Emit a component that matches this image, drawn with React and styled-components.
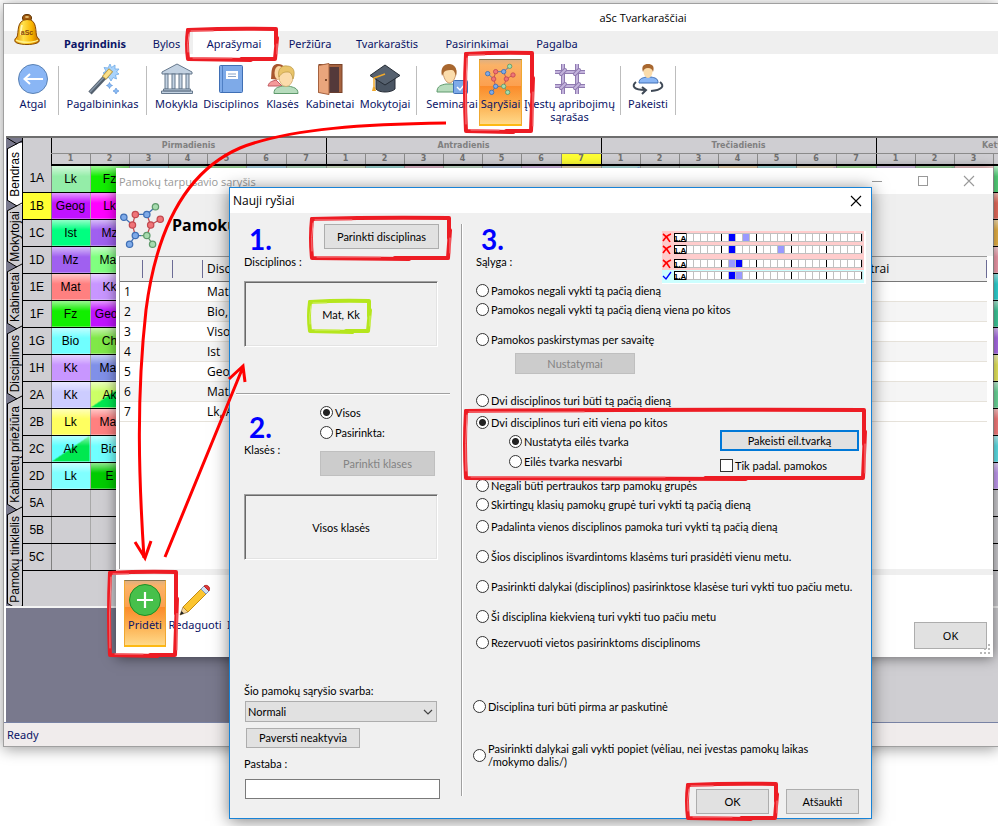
import React, { useState } from 'react';
import styled, { createGlobalStyle, css } from 'styled-components';

const uiFont = '"Noto Sans", "Open Sans", sans-serif';
const titleFont = '"Open Sans", "Noto Sans", sans-serif';
const dialogFont = 'Lato, "Open Sans", sans-serif';
const gridFont = '"Liberation Sans", Arial, sans-serif';
const navy = '#0a1466';

const GlobalStyle = createGlobalStyle`
  * {
    box-sizing: border-box;
  }

  body {
    margin: 0;
    background: #ffffff;
    font-family: ${uiFont};
    font-size: 11px;
    color: #000000;
  }

  button,
  input,
  select {
    font: inherit;
    color: inherit;
    margin: 0;
  }
`;

const Desktop = styled.div`
  position: relative;
  min-height: 100vh;
  padding: 3px 0 0 3px;
  overflow: hidden;
`;

/* ---------- main window ---------- */

const MainWindow = styled.div`
  border: 1px solid #a0a0a0;
  border-right: none;
  background: #ffffff;
  box-shadow: 0 2px 14px rgba(0, 0, 0, 0.4);
`;

const TitleBar = styled.header`
  display: flex;
  align-items: center;
  justify-content: center;
  height: 27px;
  padding-left: 284px;
  font-family: ${titleFont};
  font-size: 11px;
`;

const Bell = styled.svg`
  position: absolute;
  left: 13px;
  top: 13px;
`;

const TabBar = styled.nav`
  display: flex;
  height: 23px;
  padding-left: 46px;
  background: #efefef;
`;

const Tab = styled.button`
  width: ${(p) => p.$w}px;
  padding: 2px 0 0;
  border: none;
  background: ${(p) => (p.$active ? '#ffffff' : 'transparent')};
  color: ${navy};
  font-weight: ${(p) => (p.$bold ? 700 : 400)};
  white-space: nowrap;
`;

const Toolbar = styled.div`
  display: flex;
  align-items: flex-start;
  height: 82px;
  padding: 5px 0 0 4px;
`;

const Separator = styled.div`
  width: 1px;
  height: 49px;
  margin: 7px ${(p) => p.$right || 0}px 0 ${(p) => p.$left || 0}px;
  background: #bdbdbd;
`;

const ToolButton = styled.button`
  display: flex;
  flex-direction: column;
  align-items: center;
  flex: none;
  width: ${(p) => p.$w}px;
  height: 67px;
  padding: 3px 0 0;
  border: 1px solid transparent;
  background: transparent;
  color: ${navy};
  line-height: 13px;
  text-align: center;
  white-space: pre;

  svg {
    flex: none;
    margin-bottom: 2px;
    overflow: visible;
  }

  ${(p) =>
    p.$active &&
    css`
      border-color: #8a7850 #f0a830 #fdb913;
      border-bottom-width: 2px;
      background: linear-gradient(#e0b080, #fbb266 8%, #fca050 40%, #fb8b2b 41%, #fcb050 70%, #ffd98a);
    `}
`;

/* ---------- timetable ---------- */

const Workspace = styled.div`
  display: flex;
  height: 470px;
  margin-left: 2px;
  border-top: 2px solid #6e6e6e;
  background: #cfced2;
  overflow: hidden;
`;

const SideTabs = styled.div`
  display: flex;
  flex-direction: column;
  flex: none;
  width: 17px;
  padding-left: 1px;
  border-right: 1px solid #000000;
  background: #79798d;
`;

const SideTab = styled.button`
  flex: none;
  height: ${(p) => p.$h}px;
  padding: 0 1px 0 0;
  border: none;
  border-left: 1px solid #000000;
  background: ${(p) => (p.$active ? '#ffffff' : '#cfced2')};
  font-family: ${gridFont};
  font-size: 12px;
  line-height: 14px;

  span {
    display: block;
    writing-mode: vertical-rl;
    transform: rotate(180deg);
    white-space: nowrap;
    margin: auto;
  }
`;

const NotchSvg = styled.svg`
  flex: none;
  display: block;
`;

const Timetable = styled.table`
  flex: none;
  width: 1128px;
  table-layout: fixed;
  border-collapse: collapse;
  font-family: ${gridFont};
  font-size: 12px;
  align-self: flex-start;

  th,
  td {
    padding: 0;
    text-align: center;
    font-weight: 400;
    white-space: nowrap;
    overflow: hidden;
  }
`;

const DayHead = styled.th`
  && {
    height: 15px;
    border-left: 1px solid #000000;
    border-bottom: 1px solid #8c8c8c;
    color: #808080;
    font-family: "DejaVu Sans", sans-serif;
    font-size: 8px;
    font-weight: 700;
  }
`;

const HourHead = styled.th`
  && {
    height: 12px;
    border-left: 1px solid ${(p) => (p.$first ? '#000000' : '#8c8c8c')};
    border-bottom: 2px solid #000000;
    background: ${(p) => (p.$marked ? '#ffff33' : 'transparent')};
    color: #707070;
    font-family: "DejaVu Sans", sans-serif;
    font-size: 8px;
    font-weight: 700;
    line-height: 10px;
  }
`;

const ClassHead = styled.th`
  && {
    height: 27px;
    border-right: 1px solid #808080;
    border-bottom: 1px solid #000000;
    background: ${(p) => (p.$marked ? '#ffff33' : 'transparent')};
  }
`;

const Lesson = styled.td`
  && {
    height: 27px;
    border-right: 1px solid #a8a8a8;
    border-bottom: 1px solid #000000;
    background: ${(p) =>
      p.$color
        ? `linear-gradient(rgba(255,255,255,.6), rgba(255,255,255,0) 40%), ${
            p.$corner ? `linear-gradient(to bottom right, ${p.$color} 50%, ${p.$corner} 51%)` : p.$color
          }`
        : 'transparent'};
  }
`;

const LowerPane = styled.div`
  display: flex;
  height: 116px;
  margin-left: 2px;
  border-top: 2px solid #f4f4f4;
`;

const DarkPart = styled.div`
  flex: 1;
  background: #79798d;
`;

const LightPart = styled.div`
  width: 240px;
  background: #cfced2;
`;

const StatusBar = styled.footer`
  height: 24px;
  padding-left: 3px;
  border-top: 1px solid #7882a4;
  background: #f0ecec;
  color: ${navy};
  line-height: 23px;
`;

/* ---------- relations window ---------- */

const RelationsWindow = styled.section`
  position: absolute;
  top: 168px;
  left: 116px;
  right: 5px;
  background: #ffffff;
  box-shadow: 0 1px 12px rgba(0, 0, 0, 0.5);
`;

const RelationsTitle = styled.div`
  display: flex;
  align-items: center;
  justify-content: space-between;
  height: 26px;
  padding: 0 18px 0 3px;
  color: #999999;
  font-family: ${titleFont};
  font-size: 11px;
`;

const CaptionButtons = styled.div`
  display: flex;
  gap: 34px;
`;

const CaptionButton = styled.button`
  display: flex;
  padding: 0;
  border: none;
  background: transparent;
`;

const RelationsHead = styled.div`
  display: flex;
  align-items: center;
  gap: 6px;
  height: 62px;
  padding-left: 4px;
  background: #efefef;

  h2 {
    margin: 0;
    font-family: ${titleFont};
    font-size: 16px;
    font-weight: 700;
  }
`;

const ListFrame = styled.div`
  height: 313px;
  margin: 0 6px 0 3px;
  border-left: 1px solid #9a9a9a;
`;

const RelationList = styled.table`
  width: 100%;
  border-collapse: collapse;
  font-family: ${titleFont};
  font-size: 12px;
  line-height: 18px;

  th {
    height: 25px;
    padding: 0 4px;
    border-top: 1px solid #9a9a9a;
    border-bottom: 1px solid #777777;
    background: linear-gradient(#6b6b95, #6b6b95) right 50% / 1px 18px no-repeat #efefef;
    font-weight: 400;
    text-align: left;
  }

  td {
    height: 20px;
    padding: 0 4px;
    border-bottom: 1px solid #e6e2da;
    white-space: nowrap;
  }

  tr:nth-child(even) td {
    background: #f5f5f5;
  }
`;

const RelationsFoot = styled.div`
  display: flex;
  align-items: flex-start;
  height: 88px;
  padding: 5px 6px 0 8px;
  border-top: 6px solid #efefef;
`;

const FootOk = styled.div`
  margin: 42px 0 0 auto;
`;

const Grip = styled.svg`
  position: absolute;
  right: 2px;
  bottom: 2px;
`;

/* ---------- dialog ---------- */

const Dialog = styled.section`
  position: absolute;
  top: 187px;
  left: 229px;
  right: 126px;
  border: 1px solid #1883d7;
  background: #f0f0f0;
  box-shadow: 0 2px 16px rgba(0, 0, 0, 0.5);
  font-family: ${dialogFont};
  font-size: 11px;
`;

const DialogTitle = styled.div`
  display: flex;
  align-items: center;
  justify-content: space-between;
  height: 25px;
  padding: 0 9px 0 3px;
  background: #ffffff;
  font-family: ${titleFont};
  font-size: 12px;
`;

const DialogBody = styled.form`
  display: flex;
  padding: 11px 0 4px;
`;

const LeftColumn = styled.div`
  display: flex;
  flex-direction: column;
  flex: none;
  width: 210px;
  padding: 0 0 15px 14px;
`;

const Divider = styled.div`
  width: 2px;
  margin: 0 7px 18px 21px;
  border-left: 1px solid #a0a0a0;
  border-right: 1px solid #ffffff;
`;

const RightColumn = styled.div`
  display: flex;
  flex-direction: column;
  flex: 1;
  min-width: 0;
  padding: 0 5px 0 6px;
`;

const StepRow = styled.div`
  display: flex;
  justify-content: space-between;
  width: 195px;
`;

const StepName = styled.div`
  padding-top: ${(p) => p.$drop || 0}px;
  line-height: 16px;
`;

const StepNumber = styled.div`
  padding-left: 5px;
  color: #0000ff;
  font-size: 28px;
  font-weight: 700;
  line-height: 30px;
`;

const StepControls = styled.div`
  display: flex;
  flex-direction: column;
  gap: 4px;
  width: 119px;
`;

const PushButton = styled.button`
  width: ${(p) => p.$w}px;
  height: ${(p) => p.$h || 25}px;
  margin-top: ${(p) => p.$top || 0}px;
  padding: 0;
  border: ${(p) => (p.$focus ? '2px solid #0078d7' : '1px solid #adadad')};
  background: #e1e1e1;

  &:disabled {
    border-color: #bfbfbf;
    background: #cccccc;
    color: #838383;
  }
`;

const SunkenBox = styled.div`
  display: flex;
  align-items: center;
  justify-content: center;
  width: 194px;
  height: 66px;
  margin-top: ${(p) => p.$top}px;
  border: 1px solid;
  border-color: #a0a0a0 #ffffff #ffffff #a0a0a0;
  box-shadow: inset 1px 1px #696969, inset -1px -1px #e3e3e3;
`;

const Rule = styled.hr`
  width: 214px;
  margin: 46px 0 9px -8px;
  border: none;
  border-top: 1px solid #a0a0a0;
  border-bottom: 1px solid #ffffff;
`;

const Bottom = styled.div`
  display: flex;
  flex-direction: column;
  align-items: flex-start;
  margin-top: auto;
  line-height: 16px;
`;

const Field = styled.label`
  display: flex;
  flex-direction: column;
  gap: ${(p) => p.$gap}px;
`;

const SelectWrap = styled.span`
  position: relative;
  display: block;
  margin-left: 1px;

  svg {
    position: absolute;
    right: 4px;
    top: 8px;
    pointer-events: none;
  }
`;

const Select = styled.select`
  appearance: none;
  width: 192px;
  height: 21px;
  padding: 0 2px;
  border: 1px solid #adadad;
  border-radius: 0;
  background: #e1e1e1;
`;

const NoteInput = styled.input`
  width: 195px;
  height: 20px;
  margin-left: 1px;
  padding: 0 3px;
  border: 1px solid #7a7a7a;
  background: #ffffff;
`;

const InactiveRow = styled.div`
  margin: 6px 0 8px 2px;
`;

const Choice = styled.label`
  display: flex;
  align-items: center;
  gap: 2px;
  min-height: 16px;
  margin-top: ${(p) => p.$gap || 0}px;
  line-height: 13px;
`;

const RadioInput = styled.input.attrs({ type: 'radio' })`
  appearance: none;
  flex: none;
  width: 13px;
  height: 13px;
  border: 1px solid #333333;
  border-radius: 50%;
  background: #ffffff;

  &:checked {
    background: radial-gradient(circle, #222222 0 3px, #ffffff 4px);
  }
`;

const CheckInput = styled.input.attrs({ type: 'checkbox' })`
  appearance: none;
  flex: none;
  width: 13px;
  height: 13px;
  border: 1px solid #333333;
  background: #ffffff;

  &:checked {
    background: #333333;
  }
`;

const ConditionHead = styled.div`
  display: flex;
  justify-content: space-between;
  align-items: flex-start;
  height: 58px;
`;

const Schema = styled.svg`
  flex: none;
  margin-top: 7px;
`;

const ButtonRow = styled.div`
  padding: 6px 0 0 39px;
`;

const OrderRow = styled.div`
  display: flex;
  justify-content: space-between;
  padding: 0 7px 0 33px;
`;

const OrderSide = styled.div`
  display: flex;
  flex-direction: column;
  width: 139px;
`;

const WideChoices = styled.div`
  margin: 48px 0 0 -3px;
`;

const Actions = styled.div`
  display: flex;
  justify-content: flex-end;
  gap: 17px;
  margin-top: 21px;
  padding-right: 7px;
`;

const Notes = styled.svg`
  position: absolute;
  left: 0;
  top: 0;
  pointer-events: none;
`;

/* ---------- icons ---------- */

const BellIcon = () => (
  <Bell width="29" height="33" viewBox="0 0 29 33">
    <defs>
      <linearGradient id="gold">
        <stop offset="0" stopColor="#e08a00" />
        <stop offset=".35" stopColor="#ffe14a" />
        <stop offset=".7" stopColor="#f8b400" />
        <stop offset="1" stopColor="#c06a00" />
      </linearGradient>
    </defs>
    <ellipse cx="14" cy="5" rx="4.500" ry="3.500" fill="#a35a10" stroke="#5c3200" />
    <ellipse cx="14" cy="4" rx="2" ry="1" fill="#e8c070" />
    <path d="M4 24C6 20 3 7 14 6.500S22 20 24 24c3 2 3 5 0 6-5 2-15 2-20 0-3-1-3-4 0-6z" fill="url(#gold)" stroke="#8a4a00" />
    <path d="M3 27c5 3 18 3 22 0" fill="none" stroke="#fff08a" strokeWidth="1.500" />
    <path d="M9 12c-1 3-1 6-1 10" stroke="#fff9b0" strokeWidth="2" fill="none" />
    <text x="14" y="22" fontSize="7" fontWeight="700" fontFamily="Liberation Sans, sans-serif" textAnchor="middle" fill="#8a4a10">aSc</text>
  </Bell>
);

const BackIcon = () => (
  <svg width="32" height="32" viewBox="0 0 32 32">
    <circle cx="16" cy="16" r="14.500" fill="#8ab6f5" stroke="#5a82b4" />
    <path d="M26 16H8m5-5-5.500 5 5.500 5" fill="none" stroke="#fff" strokeWidth="2" />
  </svg>
);

const WandIcon = () => (
  <svg width="32" height="32" viewBox="0 0 32 32">
    <path d="M23 1l1.500 3.500L28 2l0 4 4 0-2.500 3L32 11l-3.500 1 1 4-3.500-1.500L24 18l-2-3.500-4 1 1-4-3-1.500 3-2-2-3.500 4 .5z" fill="#a9d3fb" stroke="#6fa9e6" strokeWidth=".8" />
    <path d="M3 30l15-16" stroke="#54606e" strokeWidth="4.500" />
    <path d="M3 29l15-16" stroke="#8797a8" strokeWidth="1.500" />
    <path d="M17 15l7-8" stroke="#b0903a" strokeWidth="5.500" />
    <path d="M17.500 14.500l6-7" stroke="#fbe08a" strokeWidth="4" />
    <path d="M22.500 19.500l1 2 2 1-2 1-1 2-1-2-2-1 2-1zM29 25l1 2 2 1-2 1-1 2-1-2-2-1 2-1z" fill="#8abcf5" stroke="#5d94da" strokeWidth=".7" />
  </svg>
);

const SchoolIcon = () => (
  <svg width="32" height="32" viewBox="0 0 32 32" fill="#c3d2e2" stroke="#66788c">
    <path d="M1 9L16 1l15 8v2H1z" />
    <rect x="4" y="11" width="3" height="15" />
    <rect x="11" y="11" width="3" height="15" />
    <rect x="18" y="11" width="3" height="15" />
    <rect x="25" y="11" width="3" height="15" />
    <path d="M2.500 26h27v2h-27zM.5 28h31v2.500H.5z" />
  </svg>
);

const BookIcon = () => (
  <svg width="32" height="32" viewBox="0 0 32 32">
    <rect x="4.500" y="2.500" width="23" height="27" rx="1" fill="#7eaae8" stroke="#3f6fb5" />
    <path d="M7.500 3v26" stroke="#4f7fc4" />
    <rect x="11" y="8" width="12" height="8" fill="#fff" />
    <path d="M13 11h8M13 13.500h8" stroke="#8aa4c8" />
  </svg>
);

const PeopleIcon = () => (
  <svg width="32" height="32" viewBox="0 0 32 32">
    <path d="M1 23c1-5 6-5 8-6l6 6z" fill="#f49a9a" stroke="#c25c62" />
    <path d="M4 16c1-5-1-15 7-15 6 0 7 4 7 8l-4 8z" fill="#a8562e" />
    <ellipse cx="12" cy="10" rx="4.500" ry="7" fill="#fbd7a2" />
    <path d="M7 30.500c0-6 4-6 8-7.500h7c4 1.500 9 1.500 9 7.500z" fill="#b7dcbd" stroke="#5f9a6c" />
    <ellipse cx="19" cy="14" rx="7" ry="9.500" fill="#fbdcab" stroke="#c8a060" strokeWidth=".7" />
    <path d="M12 14c-2-8 3-12 8-11 6 0 9 5 6 13-1-4-2-7-5-7s-6 0-9 5z" fill="#e9c46a" stroke="#b99540" strokeWidth=".7" />
  </svg>
);

const DoorIcon = () => (
  <svg width="32" height="32" viewBox="0 0 32 32">
    <rect x="5" y="1.500" width="23" height="28" fill="#a5623f" stroke="#7a4228" />
    <rect x="12" y="4" width="13" height="25.500" fill="#54393a" />
    <path d="M4.500 2.500L15 .500v31L4.500 29.500z" fill="#eaa57c" stroke="#a5623f" />
    <circle cx="12" cy="17" r="1" fill="#5c2c12" />
  </svg>
);

const CapIcon = () => (
  <svg width="32" height="32" viewBox="0 0 32 32">
    <path d="M7 14v12c3 4 15 4 19 0V14z" fill="#4a5563" stroke="#262d36" />
    <path d="M1 12.500L16 2l15 10.500L16 22z" fill="#56616f" stroke="#262d36" />
    <path d="M16 11L5 15v10" fill="none" stroke="#f0a92c" strokeWidth="1.500" />
    <path d="M3 28l1-4h2l1 4z" fill="#f0a92c" />
  </svg>
);

const SeminarIcon = () => (
  <svg width="32" height="32" viewBox="0 0 32 32">
    <path d="M1 29c0-6 4-7 9-8h6c5 1 8 2 8 8z" fill="#b7dcbd" stroke="#5f9a6c" />
    <path d="M7 8c0-4 3-6 6-6s7 2 7 7-3 11-6.500 11S7 14 7 8z" fill="#fbdcab" stroke="#b57b48" strokeWidth=".7" />
    <path d="M6 13C4 5 8 1 13 1s9 4 7 12c-1-3-2-6-4-6s-6 0-8 2z" fill="#a8672f" />
    <rect x="17.500" y="17.500" width="14" height="13" rx="1" fill="#7eaae8" stroke="#3f6fb5" />
    <path d="M21 24l3 3 5-6" fill="none" stroke="#fff" strokeWidth="1.500" />
  </svg>
);

const NetIcon = ({ size = 32 }) => (
  <svg width={size} height={size} viewBox="0 0 48 48" strokeWidth="1.300">
    <path d="M28 13h-12M37 5l-9 8M4 16l9 8M16 35l-6 9M16 35h6" fill="none" stroke="#3f6fb5" />
    <path d="M16 13l-3 11 3 11M28 13l4 11-4 11M42 18l-10 6" fill="none" stroke="#c24a50" />
    <path d="M22 35h6l6 9" fill="none" stroke="#5f9a6c" />
    <g fill="#7eaae8" stroke="#3f6fb5">
      <circle cx="4" cy="16" r="3.300" />
      <circle cx="28" cy="13" r="3.300" />
      <circle cx="16" cy="35" r="3.300" />
      <circle cx="10" cy="44" r="3.300" />
    </g>
    <g fill="#f07478" stroke="#c24a50">
      <circle cx="16" cy="13" r="3.300" />
      <circle cx="13" cy="24" r="3.300" />
      <circle cx="32" cy="24" r="3.300" />
      <circle cx="42" cy="18" r="3.300" />
    </g>
    <g fill="#a6dbae" stroke="#5f9a6c">
      <circle cx="37" cy="5" r="3.300" />
      <circle cx="28" cy="35" r="3.300" />
      <circle cx="34" cy="44" r="3.300" />
    </g>
  </svg>
);

const FenceIcon = () => (
  <svg width="32" height="32" viewBox="0 0 32 32">
    <path d="M9 1v30M23 1v30M1 9h30M1 23h30" stroke="#8f7ab0" strokeWidth="4" />
    <path d="M9 1v30M23 1v30M1 9h30M1 23h30" stroke="#c3b3dc" strokeWidth="2" />
    <path d="M7 11l4-4M21 11l4-4M7 25l4-4M21 25l4-4" stroke="#8f7ab0" strokeWidth="4" strokeLinecap="round" />
    <path d="M7 11l4-4M21 11l4-4M7 25l4-4M21 25l4-4" stroke="#c3b3dc" strokeWidth="2" strokeLinecap="round" />
  </svg>
);

const SwapIcon = () => (
  <svg width="32" height="32" viewBox="0 0 32 32">
    <path d="M7 20c0-5 4-5 7-6h5c4 1 7 1 7 6z" fill="#8ab6f5" stroke="#3f6fb5" />
    <ellipse cx="16" cy="8.500" rx="4.500" ry="6.500" fill="#fbdcab" />
    <path d="M11 9C9 3 12 1 16 1s7 2 5 8c-1-3-2-4-5-4s-4 1-5 4z" fill="#a8672f" />
    <path d="M4 19c-5 4-2 8 9 8m-3-3l4 3-4 4M28 19c5 4 2 8-9 9" fill="none" stroke="#3f4956" strokeWidth="2" />
  </svg>
);

const PlusIcon = () => (
  <svg width="32" height="32" viewBox="0 0 32 32">
    <circle cx="16" cy="16" r="15.500" fill="#47c04b" stroke="#1d8f25" />
    <path d="M16 8v16M8 16h16" stroke="#fff" strokeWidth="2.200" />
  </svg>
);

const PencilIcon = () => (
  <svg width="32" height="32" viewBox="0 0 32 32">
    <path d="M1 31l3-8 5 5z" fill="#f2d39a" stroke="#8a6a30" strokeWidth=".7" />
    <path d="M1 31l1.500-4 2.500 2.500z" fill="#222" />
    <path d="M4 23L22 5l5 5L9 28z" fill="#fbc531" stroke="#c48d14" />
    <path d="M22 5l3-3 5 5-3 3z" fill="#cfe0f4" stroke="#7f98b8" />
    <path d="M25 2c3-2 7 1 5 5z" fill="#e33a3a" stroke="#b02626" />
  </svg>
);

const DeleteIcon = () => (
  <svg width="32" height="32" viewBox="0 0 32 32">
    <path d="M6 6l20 20M26 6L6 26" stroke="#d03030" strokeWidth="4" />
  </svg>
);

const CloseIcon = ({ color }) => (
  <svg width="12" height="12" viewBox="0 0 12 12">
    <path d="M1 1l10 10M11 1L1 11" stroke={color} strokeWidth="1.100" />
  </svg>
);

/* ---------- data ---------- */

const menuTabs = [
  { name: 'Pagrindinis', w: 90, bold: true },
  { name: 'Bylos', w: 53 },
  { name: 'Aprašymai', w: 82 },
  { name: 'Peržiūra', w: 70 },
  { name: 'Tvarkaraštis', w: 84 },
  { name: 'Pasirinkimai', w: 96 },
  { name: 'Pagalba', w: 64 },
];

const days = ['Pirmadienis', 'Antradienis', 'Trečiadienis', 'Ketvirtadienis'];
const hours = [1, 2, 3, 4, 5, 6, 7];
const hourWidths = [39, 39, 39, 39, 39, 40, 40];

const firstRow = [
  ['#50c8d8'], ['#48d890'], ['#50d850'], ['#60c8e8'], ['#80d8a0'],
  ['#b8e0a0'], ['#40c8c0'], ['#d880a8'], ['#a0d8b0'], ['#80a8e0'], ['#b880e0'], ['#e8c070'],
  ['#70dcdc', '#1a70e0'], ['#98aea8'], ['#9ed8a8'], ['#e8bc68'], ['#50d4d4'], ['#e8d490', '#a880d8'], ['#50d838'],
  ['#bc9ce4'], ['#44c444', '#208830'], ['#f09898'], ['#58dc80'],
];

const edgeColors = ['#58dc80', '#f07060', '#f0b848', '#f8a0b0', '#30dcdc', '#40d0a0', '#b070f0', '#f0f060', '#70e0a0', '#ff8080', '#60e8f0', '#c8a0f8'];

const classes = [
  { name: '1A', cells: [['Lk', '#94eda8'], ['Fz', '#12ee00']] },
  { name: '1B', marked: true, cells: [['Geog', '#c012ff'], ['Lk', '#ff00ff']] },
  { name: '1C', cells: [['Ist', '#00ff80'], ['Mz', '#a060f0']] },
  { name: '1D', cells: [['Mz', '#a060f0'], ['Mat', '#80ff80']] },
  { name: '1E', cells: [['Mat', '#ff8080'], ['Kk', '#c896ff']] },
  { name: '1F', cells: [['Fz', '#12ee00'], ['Geog', '#c012ff']] },
  { name: '1G', cells: [['Bio', '#70ffff'], ['Ch', '#80e848']] },
  { name: '1H', cells: [['Kk', '#c896ff'], ['Mat', '#8090e8']] },
  { name: '2A', cells: [['Kk', '#ccccff'], ['Ak', '#ccff66', '#00e850']] },
  { name: '2B', cells: [['Lk', '#ffff60'], ['Mat', '#ff8080']] },
  { name: '2C', cells: [['Ak', '#60ffff', '#00e850'], ['Bio', '#70ffff']] },
  { name: '2D', cells: [['Lk', '#80ffff'], ['E', '#00cc00']] },
  { name: '5A', cells: [] },
  { name: '5B', cells: [] },
  { name: '5C', cells: [] },
];

const sideTabs = [
  { name: 'Bendras', h: 51 },
  { name: 'Mokytojai', h: 50 },
  { name: 'Kabinetai', h: 51 },
  { name: 'Disciplinos', h: 59 },
  { name: 'Kabinetų priežiūra', h: 100 },
  { name: 'Pamokų tinklelis', h: 88 },
];

const relations = ['Mat, Kk', 'Bio, Ch', 'Viso', 'Ist', 'Geog', 'Mat', 'Lk, Ak'];

const schemaRows = [
  { y: 2, dark: 6, light: 8 },
  { y: 14, dark: 6, light: 13 },
  { y: 28, dark: 7, light: 6 },
  { y: 40, dark: 6, light: 7, ok: true },
];

/* ---------- parts ---------- */

const Notch = ({ above, below }) => (
  <NotchSvg width="15" height="11" viewBox="0 0 15 11">
    <rect width="15" height="6" fill={above} />
    <rect y="5" width="15" height="6" fill={below} />
    <path d="M0 0L10 6 0 11z" fill="#79798d" />
    <path d="M0 0l10 6M0 11L15 3" fill="none" stroke="#000" />
  </NotchSvg>
);

const Tool = ({ label, w, active, children }) => (
  <ToolButton type="button" $w={w} $active={active}>
    {children}
    {label}
  </ToolButton>
);

const lessonFor = (row, rowIndex, col) => {
  if (row.cells[col]) return row.cells[col];
  if (rowIndex === 0 && firstRow[col - 2]) return ['', ...firstRow[col - 2]];
  if (col === 24 && edgeColors[rowIndex]) return ['', edgeColors[rowIndex]];
  return [''];
};

const Grid = () => (
  <Timetable>
    <colgroup>
      <col style={{ width: 28 }} />
      {days.map((day) => hourWidths.map((w, i) => <col key={day + i} style={{ width: w }} />))}
    </colgroup>
    <thead>
      <tr>
        <th rowSpan={2} />
        {days.map((day) => (
          <DayHead key={day} colSpan={7}>{day}</DayHead>
        ))}
      </tr>
      <tr>
        {days.map((day, d) =>
          hours.map((h) => (
            <HourHead key={day + h} $first={h === 1} $marked={d === 1 && h === 7}>{h}</HourHead>
          ))
        )}
      </tr>
    </thead>
    <tbody>
      {classes.map((row, r) => (
        <tr key={row.name}>
          <ClassHead $marked={row.marked}>{row.name}</ClassHead>
          {days.map((day, d) =>
            hours.map((h, i) => {
              const [name, color, corner] = lessonFor(row, r, d * 7 + i);
              return <Lesson key={day + h} $color={color} $corner={corner}>{name}</Lesson>;
            })
          )}
        </tr>
      ))}
    </tbody>
  </Timetable>
);

const ConditionSchema = () => (
  <Schema width="204" height="53" viewBox="0 0 204 53">
    <rect width="204" height="53" fill="#fff" />
    <rect width="202" height="39" fill="#ffcccc" />
    <rect y="39" width="202" height="13" fill="#ccffff" />
    {schemaRows.map((row) => (
      <g key={row.y} transform={`translate(0 ${row.y})`}>
        {row.ok ? (
          <path d="M1 5l3 3 5-7" fill="none" stroke="#0000ff" strokeWidth="1.300" />
        ) : (
          <path d="M1 1c3 2 5 4 7 8M9 1C6 2 3 5 1 8" fill="none" stroke="#ff0000" strokeWidth="1.600" />
        )}
        <rect x="12.500" y=".500" width="12" height="8" fill="#fff" stroke="#000" />
        <text x="18" y="8" fontSize="8" fontWeight="700" fontFamily="Liberation Sans, sans-serif" textAnchor="middle">1.A</text>
        <rect x="25" y=".500" width="175" height="8" fill="#fff" stroke="#c0c0c0" />
        {Array.from({ length: 25 }, (_, i) => {
          const last = i % 5 === 4;
          const fill = i === row.dark ? '#0000ff' : i === row.light ? '#9999ff' : '#fff';
          return (
            <g key={i}>
              <rect x={25 + i * 7} y="1" width="6" height="7" fill={fill} />
              <rect x={24 + i * 7 + 7} y="1" width="1" height="7" fill={last ? '#000' : '#c0c0c0'} />
            </g>
          );
        })}
      </g>
    ))}
  </Schema>
);

const Frame = ({ x, y, w, h, color = '#ed1c24', pale = '#f7888c' }) => (
  <g transform={`translate(${x} ${y})`} fill="none" strokeLinejoin="round" strokeLinecap="round">
    <path d={`M3 4Q${w / 2} 2 ${w - 3} 3L${w - 3} ${h / 2}`} stroke={color} strokeWidth="4" />
    <path d={`M${w - 2} ${h / 3}L${w - 4} ${h - 3}L${w * 0.6} ${h - 3}`} stroke={color} strokeWidth="4" />
    <path d={`M${w * 0.7} ${h - 2}L3 ${h - 3}Q1 ${h / 2} 3 4`} stroke={color} strokeWidth="4" />
    <path d={`M6 5H${w * 0.3}M${w - 2} ${h / 2}V${h - 8}M3 ${h - 10}Q2 ${h / 2} 4 8M8 ${h - 4}H${w * 0.5}`} stroke={pale} strokeWidth="1" />
  </g>
);

const Annotations = () => (
  <Notes width="998" height="826" viewBox="0 0 998 826">
    <Frame x="185" y="26" w={94} h={36} />
    <Frame x="463" y="50" w={72} h={84} />
    <Frame x="309" y="215" w={143} h={46} />
    <Frame x="307" y="298" w={65} h={36} color="#b5e61d" pale="#d3f070" />
    <Frame x="463" y="407" w={404} h={74} />
    <Frame x="107" y="569" w={72} h={89} />
    <Frame x="685" y="781" w={94} h={40} />
    <g fill="none" stroke="#ff0000" strokeWidth="3">
      <path d="M446 123C370 124 290 128 240 148C180 174 155 240 146 310C136 400 139 480 144 558" />
      <path d="M135 542l10 16 6-17" />
      <path d="M165 557L243 367M229 379l14-13 2 16" />
    </g>
  </Notes>
);

const conditions = [
  { id: 'group', gap: 4, text: 'Negali būti pertraukos tarp pamokų grupės' },
  { id: 'mixed', gap: 3, text: 'Skirtingų klasių pamokų grupė turi vykti tą pačią dieną' },
  { id: 'split', gap: 6, text: 'Padalinta vienos disciplinos pamoka turi vykti tą pačią dieną' },
  { id: 'start', gap: 14, text: 'Šios disciplinos išvardintoms klasėms turi prasidėti vienu metu.' },
  { id: 'parallel', gap: 14, text: 'Pasirinkti dalykai (disciplinos) pasirinktose klasėse turi vykti tuo pačiu metu.' },
  { id: 'each', gap: 14, text: 'Ši disciplina kiekvieną turi vykti tuo pačiu metu' },
  { id: 'reserve', gap: 10, text: 'Rezervuoti vietos pasirinktoms disciplinoms' },
];

const NewRelationDialog = () => {
  const [condition, setCondition] = useState('follow');
  const [order, setOrder] = useState('fixed');
  const [scope, setScope] = useState('all');

  const conditionRadio = (id, text, gap) => (
    <Choice key={id} $gap={gap}>
      <RadioInput name="condition" checked={condition === id} onChange={() => setCondition(id)} />
      {text}
    </Choice>
  );

  return (
    <Dialog role="dialog" aria-label="Nauji ryšiai">
      <DialogTitle>
        Nauji ryšiai
        <CaptionButton type="button" aria-label="Uždaryti"><CloseIcon color="#000" /></CaptionButton>
      </DialogTitle>
      <DialogBody onSubmit={(e) => e.preventDefault()}>
        <LeftColumn>
          <StepRow>
            <StepName>
              <StepNumber>1.</StepNumber>
              Disciplinos :
            </StepName>
            <PushButton type="button" $w={115}>Parinkti disciplinas</PushButton>
          </StepRow>
          <SunkenBox $top={11}>Mat, Kk</SunkenBox>
          <Rule />
          <StepRow>
            <StepName $drop={8}>
              <StepNumber>2.</StepNumber>
              Klasės :
            </StepName>
            <StepControls>
              <Choice>
                <RadioInput name="scope" checked={scope === 'all'} onChange={() => setScope('all')} />
                Visos
              </Choice>
              <Choice>
                <RadioInput name="scope" checked={scope === 'some'} onChange={() => setScope('some')} />
                Pasirinkta:
              </Choice>
              <PushButton type="button" $w={115} $top={7} disabled={scope === 'all'}>Parinkti klases</PushButton>
            </StepControls>
          </StepRow>
          <SunkenBox $top={18}>Visos klasės</SunkenBox>
          <Bottom>
            <Field $gap={2}>
              Šio pamokų sąryšio svarba:
              <SelectWrap>
                <Select defaultValue="Normali">
                  <option>Normali</option>
                </Select>
                <svg width="10" height="6" viewBox="0 0 10 6">
                  <path d="M1 1l4 4 4-4" fill="none" stroke="#444" strokeWidth="1.200" />
                </svg>
              </SelectWrap>
            </Field>
            <InactiveRow>
              <PushButton type="button" $w={114} $h={20}>Paversti neaktyvia</PushButton>
            </InactiveRow>
            <Field $gap={7}>
              Pastaba :
              <NoteInput type="text" />
            </Field>
          </Bottom>
        </LeftColumn>
        <Divider />
        <RightColumn>
          <ConditionHead>
            <StepName>
              <StepNumber>3.</StepNumber>
              Sąlyga :
            </StepName>
            <ConditionSchema />
          </ConditionHead>
          {conditionRadio('notSame', 'Pamokos negali vykti tą pačią dieną')}
          {conditionRadio('notFollow', 'Pamokos negali vykti tą pačią dieną viena po kitos', 3)}
          {conditionRadio('week', 'Pamokos paskirstymas per savaitę', 14)}
          <ButtonRow>
            <PushButton type="button" $w={120} $h={21} disabled={condition !== 'week'}>Nustatymai</PushButton>
          </ButtonRow>
          {conditionRadio('same', 'Dvi disciplinos turi būti tą pačią dieną', 18)}
          {conditionRadio('follow', 'Dvi disciplinos turi eiti viena po kitos', 6)}
          <OrderRow>
            <div>
              <Choice $gap={3}>
                <RadioInput name="order" checked={order === 'fixed'} onChange={() => setOrder('fixed')} />
                Nustatyta eilės tvarka
              </Choice>
              <Choice $gap={4}>
                <RadioInput name="order" checked={order === 'any'} onChange={() => setOrder('any')} />
                Eilės tvarka nesvarbi
              </Choice>
            </div>
            <OrderSide>
              <PushButton type="button" $w={139} $h={21} $focus>Pakeisti eil.tvarką</PushButton>
              <Choice $gap={6}>
                <CheckInput />
                Tik padal. pamokos
              </Choice>
            </OrderSide>
          </OrderRow>
          {conditions.map((c) => conditionRadio(c.id, c.text, c.gap))}
          <WideChoices>
            {conditionRadio('edge', 'Disciplina turi būti pirma ar paskutinė')}
            {conditionRadio(
              'afternoon',
              <span>
                Pasirinkti dalykai gali vykti popiet (vėliau, nei įvestas pamokų laikas
                <br />
                /mokymo dalis/)
              </span>,
              28
            )}
          </WideChoices>
          <Actions>
            <PushButton type="submit" $w={73}>OK</PushButton>
            <PushButton type="button" $w={73}>Atšaukti</PushButton>
          </Actions>
        </RightColumn>
      </DialogBody>
    </Dialog>
  );
};

const Relations = () => (
  <RelationsWindow>
    <RelationsTitle>
      Pamokų tarpusavio sąryšis
      <CaptionButtons>
        <CaptionButton type="button" aria-label="Sumažinti">
          <svg width="12" height="12"><path d="M1 6.500h10" stroke="#999" /></svg>
        </CaptionButton>
        <CaptionButton type="button" aria-label="Padidinti">
          <svg width="12" height="12"><rect x="1.500" y="1.500" width="9" height="9" fill="none" stroke="#999" /></svg>
        </CaptionButton>
        <CaptionButton type="button" aria-label="Uždaryti"><CloseIcon color="#999" /></CaptionButton>
      </CaptionButtons>
    </RelationsTitle>
    <RelationsHead>
      <NetIcon size={46} />
      <h2>Pamokų tarpusavio sąryšis</h2>
    </RelationsHead>
    <ListFrame>
      <RelationList>
        <colgroup>
          <col style={{ width: 23 }} />
          <col style={{ width: 30 }} />
          <col style={{ width: 30 }} />
          <col style={{ width: 620 }} />
          <col />
        </colgroup>
        <thead>
          <tr>
            <th />
            <th />
            <th />
            <th>Disciplinos</th>
            <th>Parametrai</th>
          </tr>
        </thead>
        <tbody>
          {relations.map((name, i) => (
            <tr key={name}>
              <td>{i + 1}</td>
              <td />
              <td />
              <td>{name}</td>
              <td />
            </tr>
          ))}
        </tbody>
      </RelationList>
    </ListFrame>
    <RelationsFoot>
      <Tool label="Pridėti" w={42} active><PlusIcon /></Tool>
      <Tool label="Redaguoti" w={58}><PencilIcon /></Tool>
      <Tool label="Ištrinti" w={40}><DeleteIcon /></Tool>
      <FootOk>
        <PushButton type="button" $w={73} $h={27}>OK</PushButton>
      </FootOk>
    </RelationsFoot>
    <Grip width="11" height="11" viewBox="0 0 11 11" fill="#b8b8b8">
      <path d="M8 0h2v2H8zM8 4h2v2H8zM4 4h2v2H4zM8 8h2v2H8zM4 8h2v2H4zM0 8h2v2H0z" />
    </Grip>
  </RelationsWindow>
);

const App = () => {
  const [menu, setMenu] = useState('Aprašymai');

  return (
    <Desktop>
      <GlobalStyle />
      <MainWindow>
        <TitleBar>aSc Tvarkaraščiai</TitleBar>
        <BellIcon />
        <TabBar>
          {menuTabs.map((t) => (
            <Tab key={t.name} type="button" $w={t.w} $bold={t.bold} $active={t.name === menu} onClick={() => setMenu(t.name)}>
              {t.name}
            </Tab>
          ))}
        </TabBar>
        <Toolbar>
          <Tool label="Atgal" w={50}><BackIcon /></Tool>
          <Separator />
          <Tool label="Pagalbininkas" w={87}><WandIcon /></Tool>
          <Separator $right={3} />
          <Tool label="Mokykla" w={53}><SchoolIcon /></Tool>
          <Tool label="Disciplinos" w={56}><BookIcon /></Tool>
          <Tool label="Klasės" w={47}><PeopleIcon /></Tool>
          <Tool label="Kabinetai" w={48}><DoorIcon /></Tool>
          <Tool label="Mokytojai" w={62}><CapIcon /></Tool>
          <Separator $right={8} />
          <Tool label="Seminarai" w={54}><SeminarIcon /></Tool>
          <Tool label="Sąryšiai" w={43} active><NetIcon /></Tool>
          <Tool label={'Įvestų apribojimų\nsąrašas'} w={95}><FenceIcon /></Tool>
          <Separator $right={4} $left={3} />
          <Tool label="Pakeisti" w={46}><SwapIcon /></Tool>
          <Separator $left={4} />
        </Toolbar>
        <Workspace>
          <SideTabs>
            <Notch above="#79798d" below="#ffffff" />
            {sideTabs.map((t, i) => (
              <React.Fragment key={t.name}>
                <SideTab type="button" $h={t.h} $active={i === 0}><span>{t.name}</span></SideTab>
                <Notch above={i === 0 ? '#ffffff' : '#cfced2'} below={i === sideTabs.length - 1 ? '#79798d' : '#cfced2'} />
              </React.Fragment>
            ))}
          </SideTabs>
          <Grid />
        </Workspace>
        <LowerPane>
          <DarkPart />
          <LightPart />
        </LowerPane>
        <StatusBar>Ready</StatusBar>
      </MainWindow>
      <Relations />
      <NewRelationDialog />
      <Annotations />
    </Desktop>
  );
};

export default App;
